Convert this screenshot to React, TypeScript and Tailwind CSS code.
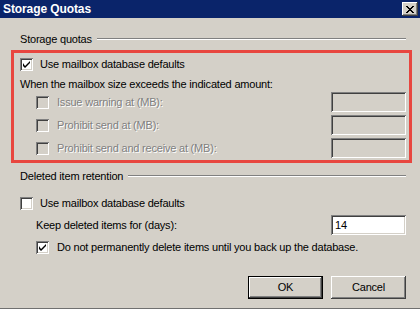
import React from "react";

// classic win2k bevels
const sunken =
  "shadow-[inset_1px_1px_0_#808080,inset_-1px_-1px_0_#ffffff,inset_2px_2px_0_#404040,inset_-2px_-2px_0_#d4d0c8]";
const raised =
  "shadow-[inset_-1px_-1px_0_#404040,inset_1px_1px_0_#ffffff,inset_-2px_-2px_0_#808080,inset_2px_2px_0_#d4d0c8]";
const disabledText = "text-[#808080] [text-shadow:1px_1px_0_#ffffff]";

const CheckBox = ({ checked = false, disabled = false }: { checked?: boolean; disabled?: boolean }) => (
  <div className={`relative h-[13px] w-[13px] shrink-0 ${sunken} ${disabled ? "bg-[#d4d0c8]" : "bg-white"}`}>
    {checked && (
      <svg className="absolute left-0 top-0" width="13" height="13" viewBox="0 0 13 13">
        <path d="M3 5 L3 8 L5 10 L10 5 L10 3 L5 8 Z" fill="#000" />
      </svg>
    )}
  </div>
);

const GroupHeader = ({ label, className = "" }: { label: string; className?: string }) => (
  <div className={`flex h-[14px] items-center pl-[20px] pr-[14px] ${className}`}>
    <span>{label}</span>
    <div className="ml-[5px] h-[2px] flex-1 border-t border-b border-t-[#808080] border-b-white" />
  </div>
);

const QuotaRow = ({ label, className = "" }: { label: string; className?: string }) => (
  <div className={`flex h-[20px] items-center pl-[16px] ${className}`}>
    <CheckBox disabled />
    <span className={`ml-[8px] ${disabledText}`}>{label}</span>
    <div className={`ml-auto h-[20px] w-[75px] bg-[#d4d0c8] ${sunken}`} />
  </div>
);

const Button = ({ label, isDefault = false }: { label: string; isDefault?: boolean }) => (
  <div className={`h-[23px] w-[75px] ${isDefault ? "border border-black" : ""}`}>
    <div className={`flex h-full w-full items-center justify-center bg-[#d4d0c8] ${raised}`}>{label}</div>
  </div>
);

export default function App() {
  return (
    <div className="flex h-[309px] w-[420px] flex-col overflow-hidden border-b border-[#707070] bg-[#d4d0c8] font-['Liberation_Sans',Arial,sans-serif] text-[11px] leading-none tracking-[-0.2px] text-black">
      {/* title bar */}
      <div className="flex h-[18px] shrink-0 items-center bg-[#0a246a] pl-[3px] pr-[2px]">
        <span className="text-[12px] font-bold tracking-[-0.1px] text-white">Storage Quotas</span>
        <div className={`ml-auto flex h-[14px] w-[16px] items-center justify-center bg-[#d4d0c8] ${raised}`}>
          <svg width="8" height="7" viewBox="0 0 8 7">
            <path d="M0 0h2v1h-2zM6 0h2v1h-2zM1 1h2v1h-2zM5 1h2v1h-2zM2 2h4v1h-4zM3 3h2v1h-2zM2 4h4v1h-4zM1 5h2v1h-2zM5 5h2v1h-2zM0 6h2v1h-2zM6 6h2v1h-2z" fill="#000" />
          </svg>
        </div>
      </div>

      <GroupHeader label="Storage quotas" className="mt-[14px]" />

      {/* highlighted quota block */}
      <div className="ml-[11px] mr-[8px] mt-[4px] flex flex-col border-[3px] border-[#e8463f] pb-[2px] pl-[6px] pr-[3px] pt-[4px]">
        <div className="flex h-[14px] items-center">
          <CheckBox checked />
          <span className="ml-[7px]">Use mailbox database defaults</span>
        </div>
        <div className="mt-[6px] flex h-[14px] items-center">When the mailbox size exceeds the indicated amount:</div>
        <QuotaRow label="Issue warning at (MB):" className="mt-[1px]" />
        <QuotaRow label="Prohibit send at (MB):" className="mt-[3px]" />
        <QuotaRow label="Prohibit send and receive at (MB):" className="mt-[3px]" />
      </div>

      <GroupHeader label="Deleted item retention" className="mt-[6px]" />

      <div className="mt-[13px] flex h-[14px] items-center pl-[20px]">
        <CheckBox />
        <span className="ml-[7px]">Use mailbox database defaults</span>
      </div>

      <div className="mt-[5px] flex h-[20px] items-center pl-[36px] pr-[14px]">
        <span>Keep deleted items for (days):</span>
        <div className={`ml-auto flex h-[20px] w-[75px] items-center bg-white pl-[4px] ${sunken}`}>14</div>
      </div>

      <div className="mt-[5px] flex h-[14px] items-center pl-[36px]">
        <CheckBox checked />
        <span className="ml-[8px]">Do not permanently delete items until you back up the database.</span>
      </div>

      <div className="mt-[22px] flex justify-end gap-[8px] pr-[14px]">
        <Button label="OK" isDefault />
        <Button label="Cancel" />
      </div>
    </div>
  );
}
